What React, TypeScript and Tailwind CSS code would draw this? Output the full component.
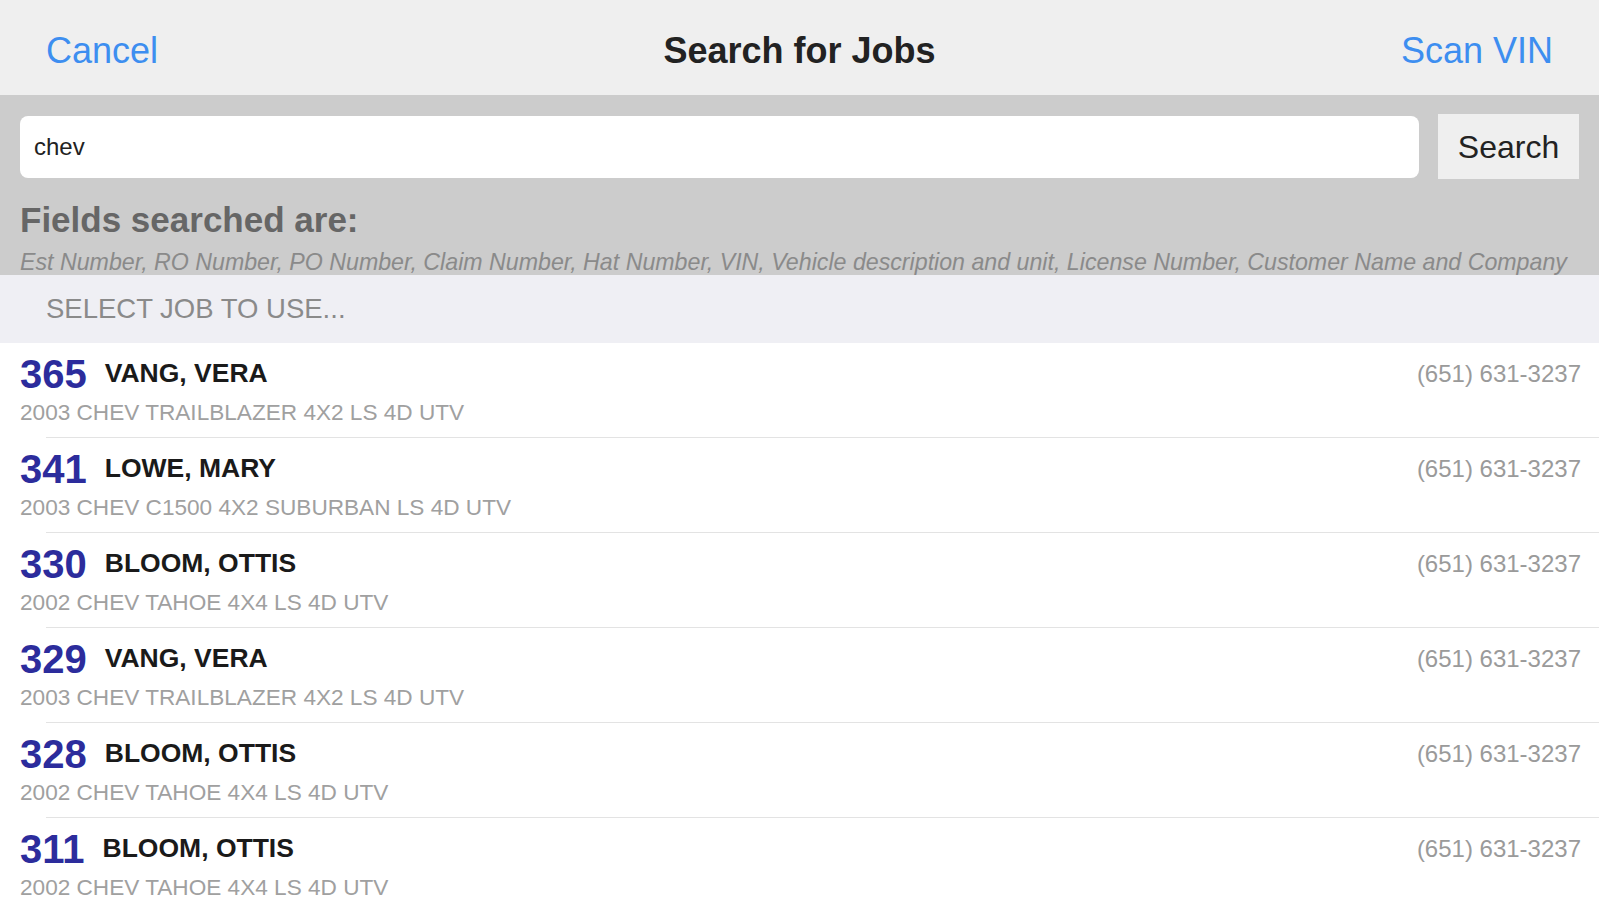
const jobs = [
  { num: "365", name: "VANG, VERA", vehicle: "2003 CHEV TRAILBLAZER 4X2 LS 4D UTV" },
  { num: "341", name: "LOWE, MARY", vehicle: "2003 CHEV C1500 4X2 SUBURBAN LS 4D UTV" },
  { num: "330", name: "BLOOM, OTTIS", vehicle: "2002 CHEV TAHOE 4X4 LS 4D UTV" },
  { num: "329", name: "VANG, VERA", vehicle: "2003 CHEV TRAILBLAZER 4X2 LS 4D UTV" },
  { num: "328", name: "BLOOM, OTTIS", vehicle: "2002 CHEV TAHOE 4X4 LS 4D UTV" },
  { num: "311", name: "BLOOM, OTTIS", vehicle: "2002 CHEV TAHOE 4X4 LS 4D UTV" },
];

const phone = "(651) 631-3237";

export default function App() {
  return (
    <div className="h-[900px] w-full overflow-hidden bg-white font-['Liberation_Sans',Arial,sans-serif]">
      {/* nav bar */}
      <div className="flex h-[95px] items-center bg-[#efefef] px-[46px] pt-[6px]">
        <div className="flex-1 text-[36px] text-[#3d8ef0]">Cancel</div>
        <div className="text-[36px] font-semibold text-[#222]">Search for Jobs</div>
        <div className="flex flex-1 justify-end text-[36px] text-[#3d8ef0]">Scan VIN</div>
      </div>

      {/* search band */}
      <div className="h-[180px] bg-[#cccccc] px-[20px] pt-[19px]">
        <div className="flex items-center gap-[19px]">
          <div className="flex h-[62px] flex-1 items-center rounded-lg bg-white px-[14px] text-[24px] text-[#222]">
            chev
          </div>
          <button className="h-[65px] w-[141px] bg-[#efefef] text-[32px] text-[#222]">Search</button>
        </div>
        <div className="mt-[21px] text-[35px] leading-[40px] font-bold text-[#666]">Fields searched are:</div>
        <div className="mt-[9px] whitespace-nowrap text-[23.2px] leading-[26px] italic text-[#8a8a8a]">
          Est Number, RO Number, PO Number, Claim Number, Hat Number, VIN, Vehicle description and unit, License Number, Customer Name and Company
        </div>
      </div>

      {/* section header */}
      <div className="flex h-[68px] items-center bg-[#efeff4] pl-[46px] text-[27.5px] text-[#8a8a8a]">
        SELECT JOB TO USE...
      </div>

      {/* rows */}
      <div>
        {jobs.map((job) => (
          <div key={job.num} className="relative h-[95px] pl-[20px] pr-[18px] pt-[12px]">
            <div className="flex h-[38px] items-center">
              <span className="text-[40px] leading-[38px] font-bold text-[#2c2c9c]">{job.num}</span>
              <span className="ml-[18px] text-[26.5px] font-bold text-[#1a1a1a]">{job.name}</span>
              <span className="ml-auto text-[24px] text-[#9a9a9a]">{phone}</span>
            </div>
            <div className="mt-[7px] text-[22.6px] leading-[26px] text-[#a0a0a0]">{job.vehicle}</div>
            <div className="absolute bottom-0 left-[46px] right-0 h-px bg-[#e3e3e3]" />
          </div>
        ))}
      </div>
    </div>
  );
}
